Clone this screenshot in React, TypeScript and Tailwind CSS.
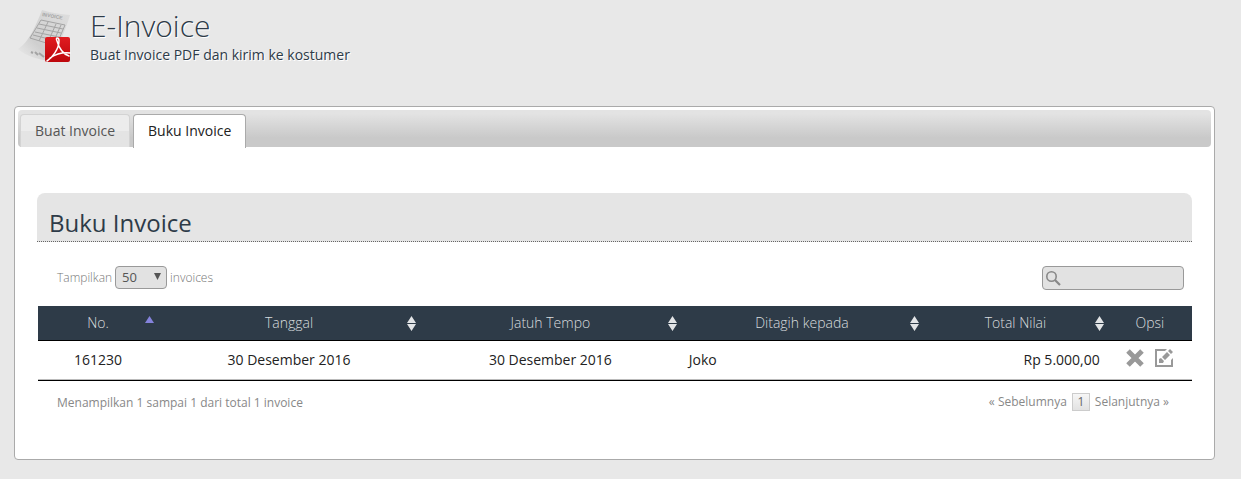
import { clsx } from 'clsx';

type SortState = 'none' | 'asc' | null;

interface Column {
  label: string;
  width: string;
  sort: SortState;
}

interface Invoice {
  no: string;
  date: string;
  due: string;
  customer: string;
  total: string;
}

const columns: Column[] = [
  { label: 'No.', width: 'w-[10.4%]', sort: 'asc' },
  { label: 'Tanggal', width: 'w-[22.7%]', sort: 'none' },
  { label: 'Jatuh Tempo', width: 'w-[22.6%]', sort: 'none' },
  { label: 'Ditagih kepada', width: 'w-[21%]', sort: 'none' },
  { label: 'Total Nilai', width: 'w-[16%]', sort: 'none' },
  { label: 'Opsi', width: 'w-[7.3%]', sort: null },
];

const invoices: Invoice[] = [
  {
    no: '161230',
    date: '30 Desember 2016',
    due: '30 Desember 2016',
    customer: 'Joko',
    total: 'Rp 5.000,00',
  },
];

function InvoiceLogo() {
  return (
    <svg width="56" height="56" viewBox="0 0 56 56" aria-hidden="true">
      <defs>
        <linearGradient id="paper" x1="0" y1="1" x2="1" y2="0">
          <stop offset="0" stopColor="#eeeeee" />
          <stop offset="0.35" stopColor="#cfcfcf" />
          <stop offset="1" stopColor="#dedede" />
        </linearGradient>
        <linearGradient id="pdf" x1="0" y1="0" x2="0" y2="1">
          <stop offset="0" stopColor="#e01c20" />
          <stop offset="1" stopColor="#bd070c" />
        </linearGradient>
      </defs>
      <path d="M26 2C36 5 44 6 54 7C49 24 42 38 36 53C22 52 10 48 2 41C14 33 20 17 26 2Z" fill="url(#paper)" />
      <g stroke="#a4a4a4" strokeWidth="1" fill="none">
        <path d="M25 12L49 17L40 38L14 30Z" />
        <path d="M23 16L47 21M21 20L45 25M19 24L43 29M17 27L41 33" />
        <path d="M32 14L23 33M40 16L31 36M45 17L36 37" />
        <path d="M15 44L17 45M19 44L22 47M23 45L28 49" strokeWidth="2" />
      </g>
      <text x="26" y="8" fontSize="5" fontWeight="700" fill="#a4a4a4" transform="rotate(10 26 8)" className="font-['Liberation_Sans',sans-serif]">
        INVOICE
      </text>
      <rect x="29" y="29" width="25" height="25" rx="2" fill="url(#pdf)" />
      <path
        d="M31 53C36 50 43 41 43 33C43 29 39 29 41 33C43 40 47 46 53 48M34 50C40 46 46 44 54 45"
        fill="none"
        stroke="#ffffff"
        strokeWidth="1.5"
        strokeLinecap="round"
        strokeLinejoin="round"
      />
    </svg>
  );
}

function SortIcon({ state }: { state: SortState }) {
  if (state === 'asc') {
    return (
      <svg width="9" height="15" viewBox="0 0 9 15" aria-hidden="true">
        <path d="M0 7L4.5 0L9 7Z" fill="#8583dc" />
      </svg>
    );
  }
  return (
    <svg width="9" height="15" viewBox="0 0 9 15" aria-hidden="true">
      <path d="M0 7L4.5 0L9 7ZM0 8L4.5 15L9 8Z" fill="#e2e4e6" />
    </svg>
  );
}

function DeleteIcon() {
  return (
    <svg width="18" height="18" viewBox="0 0 18 18" aria-hidden="true">
      <path d="M2 2L16 16M16 2L2 16" stroke="#999999" strokeWidth="5" />
    </svg>
  );
}

function EditIcon() {
  return (
    <svg width="18" height="18" viewBox="0 0 18 18" aria-hidden="true">
      <path d="M12 0H0V18H18V9L16 11V16H2V2H10Z" fill="#999999" />
      <path d="M4 14V10L6 9L9 12L8 14ZM7 8L12 3L15 6L10 11ZM13 2L15 0L18 3L16 5Z" fill="#999999" />
    </svg>
  );
}

function PageHeader() {
  return (
    <header className="flex h-[106px] pt-2 pl-0.5">
      <InvoiceLogo />
      <div className="ml-[18px] text-[#2e3b48] [text-shadow:1px_1px_0_#ffffff]">
        <h1 className="text-[30px] leading-9 font-light">E-Invoice</h1>
        <p className="text-sm leading-[22px]">Buat Invoice PDF dan kirim ke kostumer</p>
      </div>
    </header>
  );
}

function Tabs() {
  return (
    <div role="tablist" className="flex h-[37px] items-end gap-[3px] rounded bg-linear-to-b from-[#e3e3e3] from-10% to-[#c9c9c9] to-75% pl-0.5">
      <button
        role="tab"
        aria-selected="false"
        className="h-[33px] rounded-t border border-b-0 border-[#d3d3d3] bg-linear-to-b from-[#ececec] from-50% to-[#e4e4e4] to-50% px-[14px] text-sm text-[#555555]"
      >
        Buat Invoice
      </button>
      <button
        role="tab"
        aria-selected="true"
        className="-mb-px h-[34px] rounded-t border border-b-0 border-[#aaaaaa] bg-white px-[14px] pb-px text-sm text-[#212121]"
      >
        Buku Invoice
      </button>
    </div>
  );
}

function TableControls() {
  return (
    <div className="flex items-start justify-between pt-6 pr-2 pb-4 pl-5 text-xs font-light text-[#777777]">
      <label className="flex items-center gap-[3px]">
        Tampilkan
        <span className="relative">
          <select
            defaultValue="50"
            className="block h-[23px] w-[52px] appearance-none rounded border border-[#999999] bg-[#e2e2e2] pl-1.5 text-[13px] font-normal text-[#555555]"
          >
            <option>10</option>
            <option>25</option>
            <option>50</option>
            <option>100</option>
          </select>
          <svg width="7" height="7" viewBox="0 0 7 7" className="pointer-events-none absolute top-[7px] right-1.5" aria-hidden="true">
            <path d="M0 0H7L3.5 7Z" fill="#555555" />
          </svg>
        </span>
        invoices
      </label>
      <div className="relative">
        <input type="search" aria-label="Cari invoice" className="block h-6 w-[142px] rounded border border-[#999999] bg-[#e2e2e2] pr-2 pl-6 text-[13px]" />
        <svg width="15" height="15" viewBox="0 0 15 15" className="pointer-events-none absolute top-[5px] left-1" aria-hidden="true">
          <circle cx="5.5" cy="5.5" r="4.7" fill="none" stroke="#888888" strokeWidth="1.6" />
          <path d="M9 9L14 14" stroke="#888888" strokeWidth="2.2" />
        </svg>
      </div>
    </div>
  );
}

function InvoiceTable() {
  return (
    <table className="ml-px w-[calc(100%-1px)] table-fixed border-separate border-spacing-0 text-sm text-[#222222]">
      <thead className="bg-[#2e3b48] text-[#d8dbde]">
        <tr>
          {columns.map((column) => (
            <th key={column.label} className={clsx('relative h-[35px] border-b border-black p-0 text-center font-light', column.width)}>
              {column.label}
              {column.sort && (
                <button aria-label={`Urutkan ${column.label}`} className="absolute top-2.5 right-1">
                  <SortIcon state={column.sort} />
                </button>
              )}
            </th>
          ))}
        </tr>
      </thead>
      <tbody>
        {invoices.map((invoice) => (
          <tr key={invoice.no} className="*:h-[39px] *:border-b *:border-[#bbbbbb] *:p-0">
            <td className="text-center">{invoice.no}</td>
            <td className="text-center">{invoice.date}</td>
            <td className="text-center">{invoice.due}</td>
            <td><span className="pl-2">{invoice.customer}</span></td>
            <td className="text-right"><span className="pr-2">{invoice.total}</span></td>
            <td>
              <div className="flex justify-center gap-[11px] pb-1">
                <button aria-label="Hapus"><DeleteIcon /></button>
                <button aria-label="Ubah"><EditIcon /></button>
              </div>
            </td>
          </tr>
        ))}
      </tbody>
      <tfoot>
        <tr>
          <td colSpan={6} className="h-px bg-black p-0" />
        </tr>
      </tfoot>
    </table>
  );
}

function TableFooter() {
  return (
    <div className="flex items-end justify-between pt-3 pr-[23px] pl-5 text-xs text-[#888888]">
      <p>Menampilkan 1 sampai 1 dari total 1 invoice</p>
      <nav className="flex items-center gap-[5px]">
        <button>« Sebelumnya</button>
        <button aria-current="page" className="h-[18px] w-[18px] border border-[#cccccc] bg-linear-to-b from-[#f6f6f6] to-[#e2e2e2] leading-4 text-[#666666]">
          1
        </button>
        <button>Selanjutnya »</button>
      </nav>
    </div>
  );
}

export default function App() {
  return (
    <div className="min-h-screen bg-[#e8e8e8] pr-[26px] pb-[19px] pl-[14px] font-['Open_Sans',sans-serif]">
      <PageHeader />
      <main className="rounded border border-[#aaaaaa] bg-white p-[3px]">
        <Tabs />
        <section className="px-[19px] pt-[46px] pb-[45px]">
          <h2 className="rounded-t-lg border-b border-dotted border-[#666666] bg-[#e5e5e5] px-3 pt-3 text-2xl leading-9 text-[#2e3b48]">
            Buku Invoice
          </h2>
          <TableControls />
          <InvoiceTable />
          <TableFooter />
        </section>
      </main>
    </div>
  );
}
